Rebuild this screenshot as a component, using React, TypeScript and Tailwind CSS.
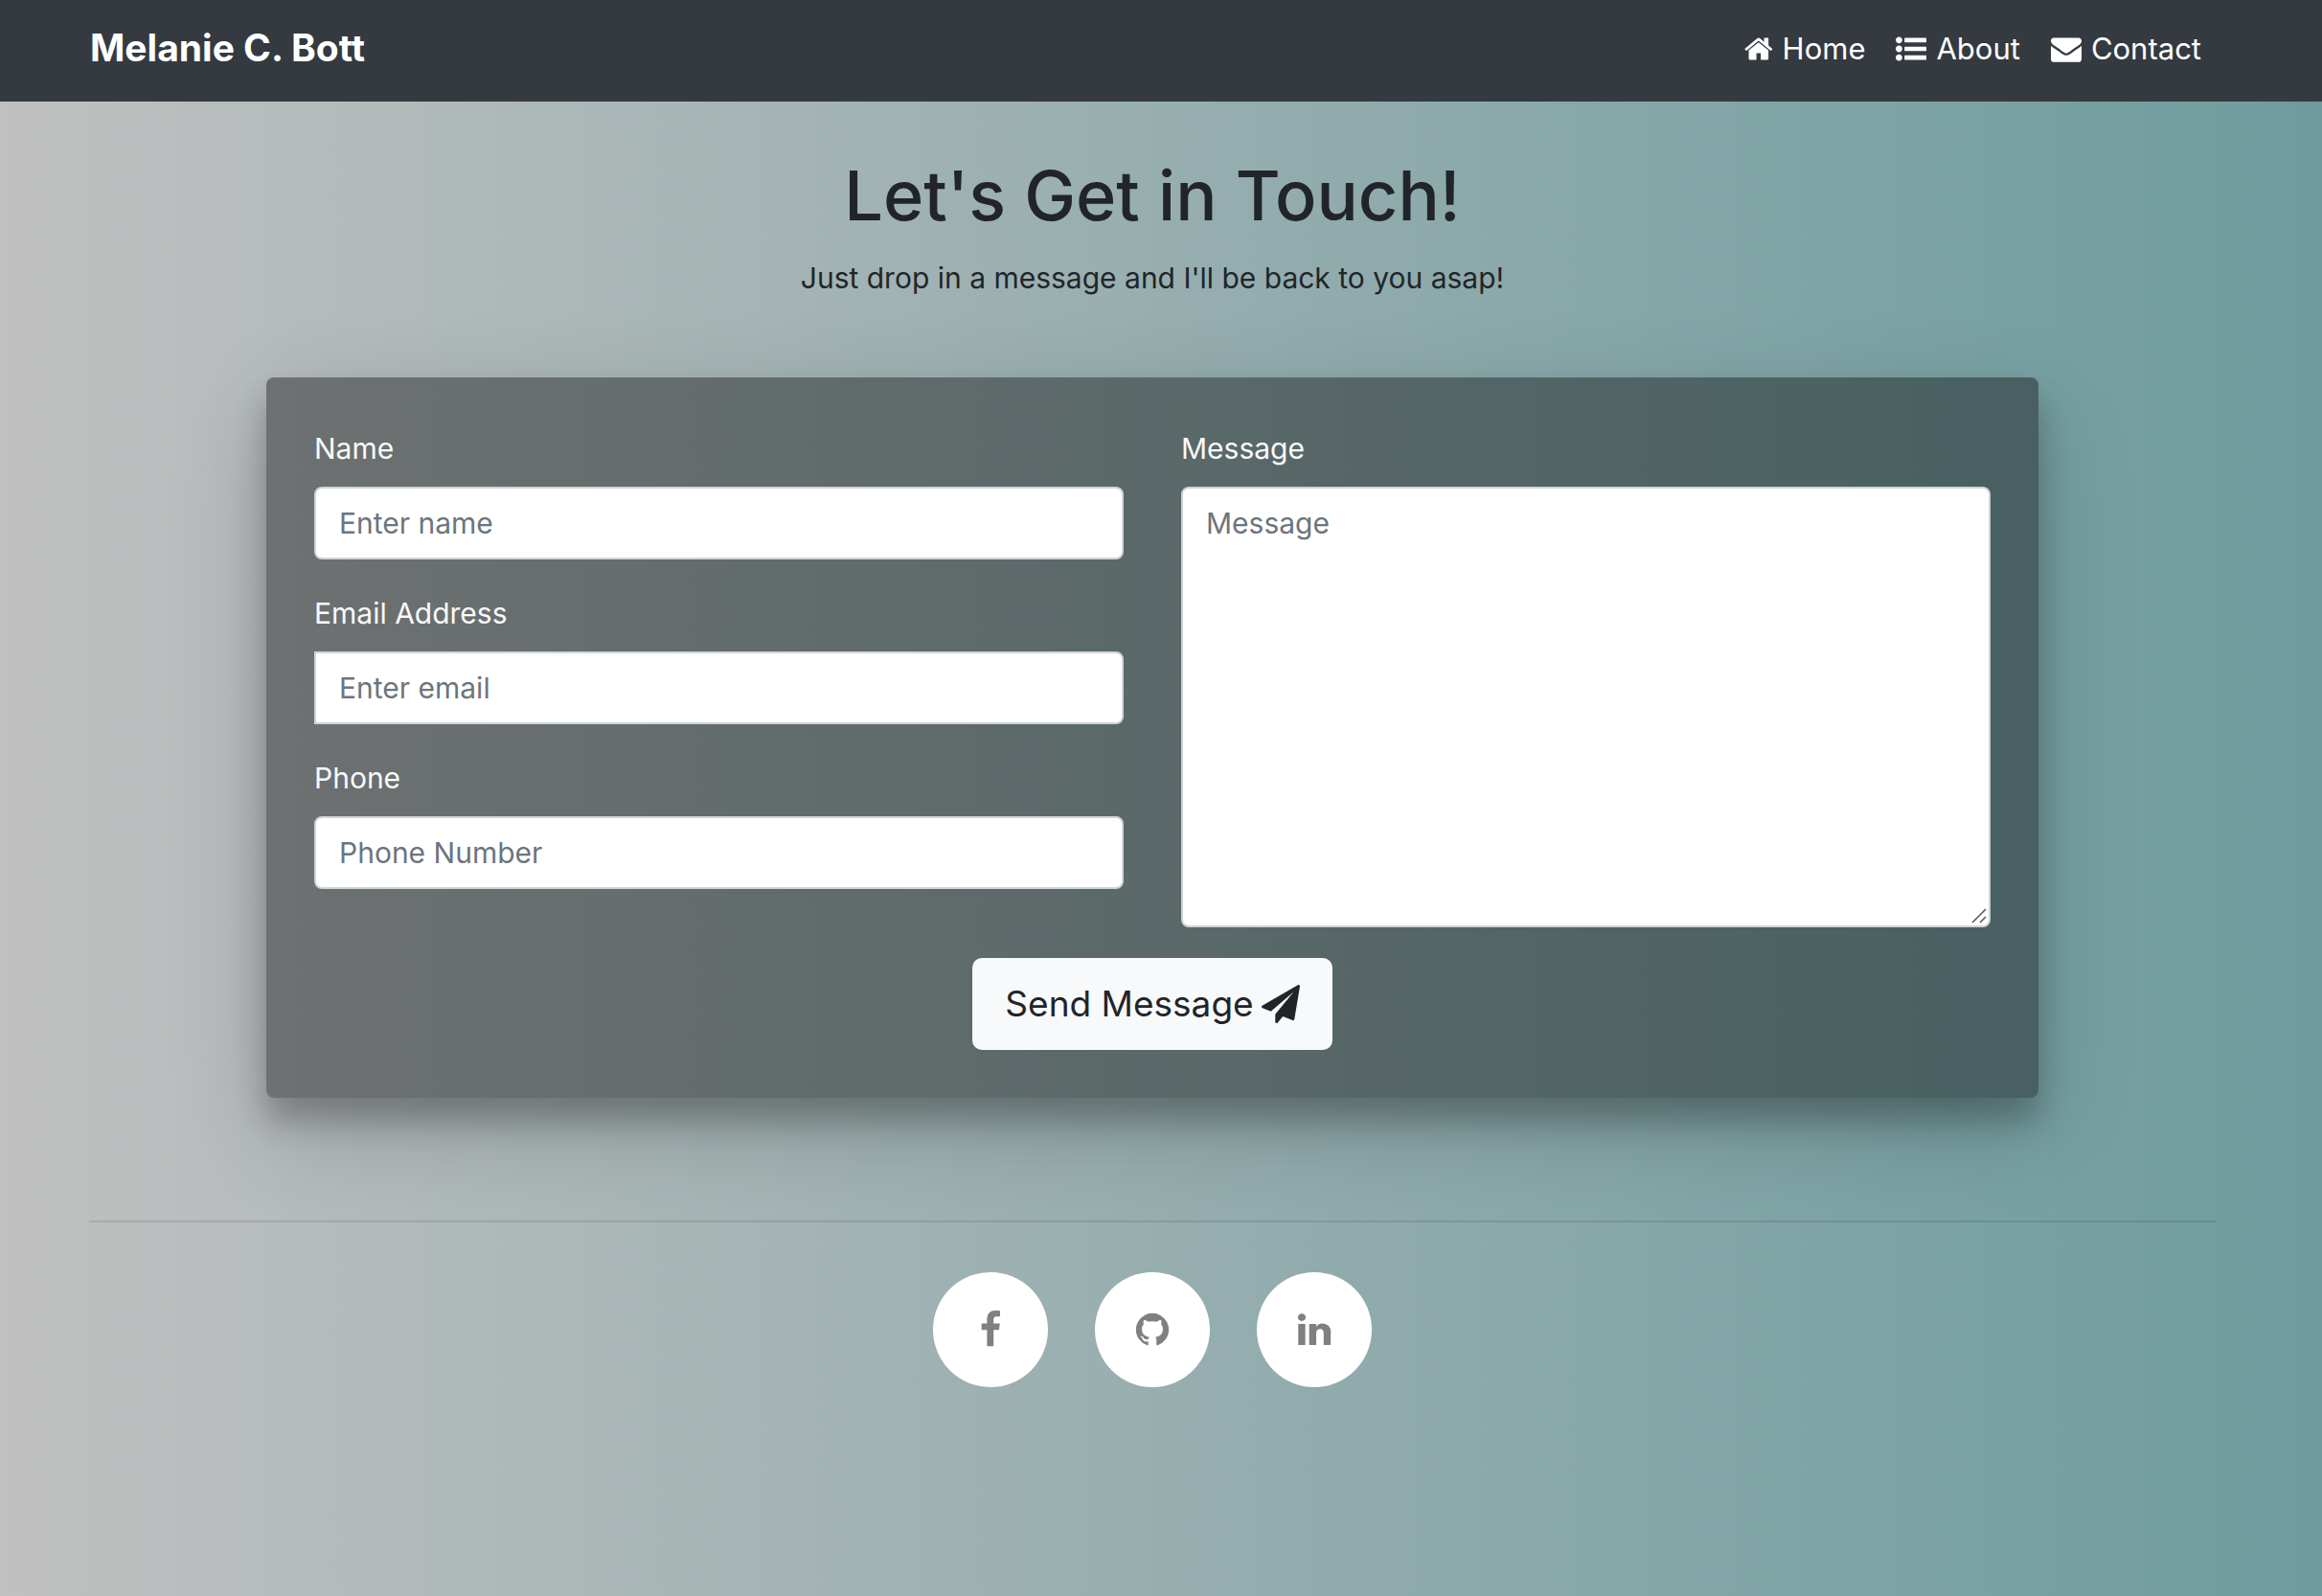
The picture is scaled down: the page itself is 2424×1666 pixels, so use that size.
type IconProps = { className?: string };

function glyph(viewBox: string, d: string) {
  return function Glyph({ className }: IconProps) {
    return (
      <svg viewBox={viewBox} className={className} fill="currentColor" aria-hidden="true">
        <path d={d} />
      </svg>
    );
  };
}

const HomeIcon = glyph(
  "64 0 1664 1792",
  "M1472 992v480q0 26-19 45t-45 19h-384v-384h-256v384h-384q-26 0-45-19t-19-45v-480q0-1 .5-3t.5-3l575-474 575 474q1 2 1 6zm223-69l-62 74q-8 9-21 11h-3q-13 0-21-7l-692-577-692 577q-12 8-24 7-13-2-21-11l-62-74q-8-10-7-23.5t11-21.5l719-599q32-26 76-26t76 26l244 204v-195q0-14 9-23t23-9h192q14 0 23 9t9 23v408l219 182q10 8 11 21.5t-7 23.5z",
);
const ListIcon = glyph(
  "0 0 1792 1792",
  "M384 1408q0 80-56 136t-136 56-136-56-56-136 56-136 136-56 136 56 56 136zm0-512q0 80-56 136t-136 56-136-56-56-136 56-136 136-56 136 56 56 136zm1408 416v192q0 13-9.5 22.5t-22.5 9.5h-1216q-13 0-22.5-9.5t-9.5-22.5v-192q0-13 9.5-22.5t22.5-9.5h1216q13 0 22.5 9.5t9.5 22.5zm-1408-928q0 80-56 136t-136 56-136-56-56-136 56-136 136-56 136 56 56 136zm1408 416v192q0 13-9.5 22.5t-22.5 9.5h-1216q-13 0-22.5-9.5t-9.5-22.5v-192q0-13 9.5-22.5t22.5-9.5h1216q13 0 22.5 9.5t9.5 22.5zm0-512v192q0 13-9.5 22.5t-22.5 9.5h-1216q-13 0-22.5-9.5t-9.5-22.5v-192q0-13 9.5-22.5t22.5-9.5h1216q13 0 22.5 9.5t9.5 22.5z",
);
const EnvelopeIcon = glyph(
  "0 0 1792 1792",
  "M1792 710v794q0 66-47 113t-113 47h-1472q-66 0-113-47t-47-113v-794q44 49 101 87 362 246 497 345 57 42 92.5 65.5t94.5 48 110 24.5h2q51 0 110-24.5t94.5-48 92.5-65.5q170-123 498-345 57-39 100-87zm0-294q0 79-49 151t-122 123q-376 261-468 325-10 7-42.5 31t-54 38.5-52 32.5-57.5 27-50 9h-2q-23 0-50-9t-57.5-27-52-32.5-54-38.5-42.5-31q-91-64-262-182.5t-205-142.5q-62-42-117-115.5t-55-136.5q0-78 41.5-130t118.5-52h1472q65 0 112.5 47t47.5 113z",
);
const PlaneIcon = glyph(
  "0 0 1792 1792",
  "M1764 11q33 24 27 64l-256 1536q-5 29-32 45-14 8-31 8-11 0-24-5l-453-185-242 295q-18 23-49 23-13 0-22-4-19-7-30.5-23.5t-11.5-36.5v-349l864-1059-1069 925-395-162q-37-14-40-55-2-40 32-59l1664-960q15-9 32-9 20 0 36 11z",
);
const FacebookIcon = glyph(
  "0 0 1792 1792",
  "M1343 12v264h-157q-86 0-116 36t-30 108v189h293l-39 296h-254v759h-306v-759h-255v-296h255v-218q0-186 104-288.5t277-102.5q147 0 228 12z",
);
const GithubIcon = glyph(
  "0 0 1792 1792",
  "M896 128q209 0 385.5 103t279.5 279.5 103 385.5q0 251-146.5 451.5t-378.5 277.5q-27 5-40-7t-13-30q0-3 .5-76.5t.5-134.5q0-97-52-142 57-6 102.5-18t94-39 81-66.5 53-105 20.5-150.5q0-119-79-206 37-91-8-204-28-9-81 11t-92 44l-38 24q-93-26-192-26t-192 26q-16-11-42.5-27t-83.5-38.5-85-13.5q-45 113-8 204-79 87-79 206 0 85 20.5 150t52.5 105 80.5 67 94 39 102.5 18q-39 36-49 103-21 10-45 15t-57 5-65.5-21.5-55.5-62.5q-19-32-48.5-52t-49.5-24l-20-3q-21 0-29 4.5t-5 11.5 9 14 13 12l7 5q22 10 43.5 38t31.5 51l10 23q13 38 44 61.5t67 30 69.5 7 55.5-3.5l23-4q0 38 .5 88.5t.5 54.5q0 18-13 30t-40 7q-232-77-378.5-277.5t-146.5-451.5q0-209 103-385.5t279.5-279.5 385.5-103z",
);
const LinkedinIcon = glyph(
  "0 0 1792 1792",
  "M477 625v991h-330v-991h330zm21-306q1 73-50.5 122t-135.5 49h-2q-82 0-132-49t-50-122q0-74 51.5-122.5t134.5-48.5 133 48.5 51 122.5zm1166 729v568h-329v-530q0-105-40.5-164.5t-126.5-59.5q-63 0-105.5 34.5t-63.5 85.5q-11 30-11 81v553h-329q2-399 2-647t-1-296l-1-48h329v144h-2q20-32 41-56t56.5-52 87-43.5 114.5-15.5q171 0 283 113.5t112 332.5z",
);

const navLinks = [
  { label: "Home", icon: HomeIcon },
  { label: "About", icon: ListIcon },
  { label: "Contact", icon: EnvelopeIcon },
];

const fields = [
  { id: "name", label: "Name", type: "text", placeholder: "Enter name", shape: "rounded-lg" },
  { id: "email", label: "Email Address", type: "email", placeholder: "Enter email", shape: "rounded-r-lg" },
  { id: "phone", label: "Phone", type: "tel", placeholder: "Phone Number", shape: "rounded-lg" },
];

const socials = [
  { label: "Facebook", icon: FacebookIcon },
  { label: "GitHub", icon: GithubIcon },
  { label: "LinkedIn", icon: LinkedinIcon },
];

const control =
  "block w-full border-2 border-[#ced4da] bg-white px-6 text-[#495057] placeholder:text-[#6c757d] placeholder:opacity-100 outline-none";

export default function App() {
  return (
    <div className="min-h-screen bg-linear-[90deg,#c0c0c0,#6e9c9e] font-['Inter',sans-serif] text-[30px] leading-[48px] text-[#212529]">
      <header className="bg-[#343a40] pr-4 text-white">
        <nav className="mx-auto flex h-[106px] max-w-[2220px] items-center justify-between">
          <a href="#top" className="pb-1.5 text-[39px] leading-[60px] font-bold">Melanie C. Bott</a>
          <ul className="flex gap-8 pr-4 pb-1 text-[31px]">
            {navLinks.map(({ label, icon: Icon }) => (
              <li key={label}>
                <a href={`#${label.toLowerCase()}`} className="flex items-center gap-2.5">
                  <Icon className="h-8 w-auto" />
                  {label}
                </a>
              </li>
            ))}
          </ul>
        </nav>
      </header>

      <main className="pr-[18px]">
        <div className="mx-auto max-w-[2220px]">
          <section className="pt-[50px] text-center">
            <h1 className="text-[72px] leading-[96px] font-medium">Let's Get in Touch!</h1>
            <p className="mt-[14px]">Just drop in a message and I'll be back to you asap!</p>
          </section>

          <form className="mx-auto mt-20 w-10/12 rounded-lg bg-black/40 p-[50px] shadow-[0_24px_32px_rgba(0,0,0,0.24),0_34px_100px_rgba(0,0,0,0.19)]">
            <div className="grid grid-cols-2 gap-[60px] text-[#f8f9fa]">
              <div className="flex flex-col gap-8">
                {fields.map((f) => (
                  <div key={f.id}>
                    <label htmlFor={f.id} className="mb-4 block">{f.label}</label>
                    <input id={f.id} type={f.type} placeholder={f.placeholder} className={`${control} ${f.shape} h-[76px]`} />
                  </div>
                ))}
              </div>
              <div>
                <label htmlFor="message" className="mb-4 block">Message</label>
                <div className="relative">
                  <textarea id="message" placeholder="Message" className={`${control} h-[460px] resize-none rounded-lg py-3`} />
                  <svg viewBox="0 0 16 16" className="pointer-events-none absolute right-1 bottom-1 size-4" stroke="#555" strokeWidth="1.5" aria-hidden="true">
                    <path d="M1 15 15 1M9 15l6-6" />
                  </svg>
                </div>
              </div>
            </div>
            <button type="button" className="mx-auto mt-8 flex h-24 items-center gap-2 rounded-[10px] bg-[#f8f9fa] px-[34px] text-[37px] text-[#212529]">
              Send Message
              <PlaneIcon className="size-10" />
            </button>
          </form>

          <hr className="mt-32 border-t-2 border-black/10" />

          <footer className="mt-[52px] flex justify-center gap-[49px]">
            {socials.map(({ label, icon: Icon }) => (
              <a key={label} href={`#${label.toLowerCase()}`} aria-label={label} className="flex size-[120px] items-center justify-center rounded-full bg-white text-[#808080]">
                <Icon className="size-10" />
              </a>
            ))}
          </footer>
        </div>
      </main>
    </div>
  );
}
